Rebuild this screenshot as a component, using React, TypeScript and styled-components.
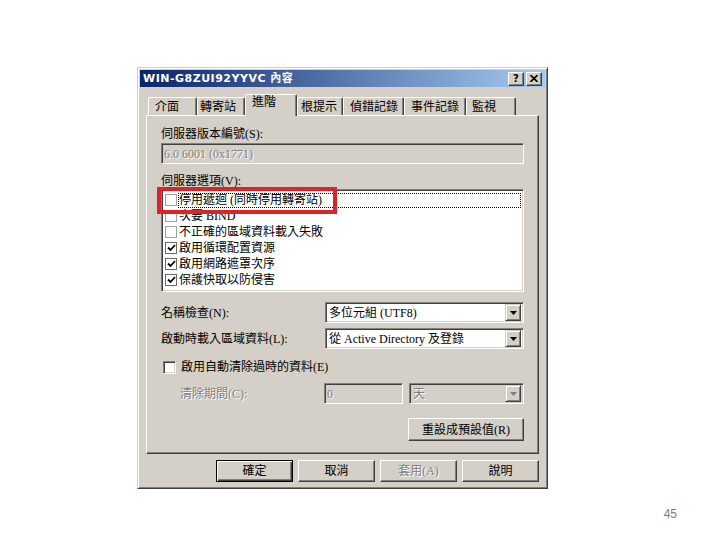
import React from 'react';
import styled, {createGlobalStyle, css} from 'styled-components';

const face = '#d4d0c8';

const GlobalStyle = createGlobalStyle`
  html, body {
    margin: 0;
    background: #fff;
  }
  body {
    font-family: "Liberation Serif", "Noto Sans CJK TC", serif;
    font-size: 12px;
    line-height: 14px;
    color: #000;
  }
`;

const raised = css`
  border: 1px solid;
  border-color: #fff #404040 #404040 #fff;
  box-shadow: inset -1px -1px #808080;
`;

const sunken = css`
  border: 1px solid;
  border-color: #808080 #fff #fff #808080;
  box-shadow: inset 1px 1px #404040, inset -1px -1px ${face};
`;

const disabledText = css`
  color: #808080;
  text-shadow: 1px 1px #fff;
`;

const Page = styled.div`
  width: 720px;
  height: 540px;
  box-sizing: border-box;
  padding: 67px 0 0 137px;
  display: flex;
  flex-direction: column;
`;

const Dialog = styled.div`
  width: 411px;
  height: 422px;
  box-sizing: border-box;
  padding: 2px;
  display: flex;
  flex-direction: column;

  background: ${face};
  border: 1px solid;
  border-color: ${face} #404040 #404040 ${face};
  box-shadow: inset 1px 1px #fff, inset -1px -1px #808080;
`;

const TitleBar = styled.div`
  display: flex;
  align-items: center;
  height: 17px;
  padding: 0 3px 0 3px;
  background: linear-gradient(to right, #0a246a, #a6caf0);
`;

const Title = styled.div`
  flex: 1;
  color: #fff;
  font-family: "DejaVu Sans", "Noto Sans CJK TC", sans-serif;
  font-weight: bold;
  font-size: 11px;
  letter-spacing: 0.5px;
  white-space: nowrap;
`;

const CaptionButtons = styled.div`
  display: flex;
  gap: 2px;
`;

const CaptionButton = styled.div`
  ${raised};
  width: 16px;
  height: 14px;
  box-sizing: border-box;
  display: flex;
  justify-content: center;
  align-items: center;
  background: ${face};
  font-family: "DejaVu Sans", sans-serif;
  font-weight: bold;
  font-size: 10px;
  line-height: 10px;
`;

const Body = styled.div`
  flex: 1;
  display: flex;
  flex-direction: column;
  padding: 7px 6px 0 6px;
`;

const TabStrip = styled.div`
  display: flex;
  align-items: flex-end;
  height: 22px;
  padding-left: 2px;
`;

type TabProps = {
    $active: boolean;
    $width: number;
    $pad: number;
}
const Tab = styled.div<TabProps>`
  position: relative;
  z-index: ${(p) => p.$active ? 1 : 0};
  box-sizing: border-box;
  width: ${(p) => p.$width}px;
  height: ${(p) => p.$active ? 22 : 18}px;
  margin-bottom: ${(p) => p.$active ? 0 : 1}px;
  padding: ${(p) => p.$active ? 0 : 2}px 0 0 ${(p) => p.$pad - 1}px;

  background: ${face};
  border-top: 1px solid #fff;
  border-left: 1px solid #fff;
  border-right: 1px solid #404040;
  border-radius: 2px 2px 0 0;
  box-shadow: inset -1px 0 #808080;
  white-space: nowrap;
`;

const Panel = styled.div`
  ${raised};
  height: 339px;
  box-sizing: border-box;
  margin-top: -1px;
  padding: 11px 14px 0 14px;
  display: flex;
  flex-direction: column;
`;

type LabelProps = {
    $gap?: number;
    $disabled?: boolean;
}
const FieldLabel = styled.div<LabelProps>`
  margin-top: ${(p) => p.$gap || 0}px;
  white-space: nowrap;
  ${(p) => p.$disabled && disabledText};
`;

type BoxProps = {
    $disabled?: boolean;
    $width?: number;
}
const TextBox = styled.div<BoxProps>`
  ${sunken};
  box-sizing: border-box;
  height: 21px;
  width: ${(p) => p.$width ? `${p.$width}px` : 'auto'};
  padding: 3px 2px 0 2px;
  background: ${(p) => p.$disabled ? face : '#fff'};
  ${(p) => p.$disabled && disabledText};
`;

const VersionBox = styled(TextBox)`
  margin-top: 2px;
`;

const ListBox = styled.div`
  ${sunken};
  position: relative;
  margin-top: 1px;
  height: 103px;
  box-sizing: border-box;
  padding: 2px 2px 0 2px;
  background: #fff;
`;

const ListRow = styled.div`
  display: flex;
  align-items: center;
  height: 16px;
  padding-left: 1px;
`;

type CheckProps = {
    $checked: boolean;
}
const ListCheck = styled.div<CheckProps>`
  width: 12px;
  height: 12px;
  box-sizing: border-box;
  border: 1px solid ${(p) => p.$checked ? '#6a6a6a' : '#a0a0a0'};
  display: flex;
  justify-content: center;
  align-items: center;
`;

type ItemTextProps = {
    $focused: boolean;
}
const ItemText = styled.span<ItemTextProps>`
  flex: 1;
  margin-left: 1px;
  padding-left: 1px;
  height: 15px;
  box-sizing: border-box;
  outline: ${(p) => p.$focused ? '1px dotted #000' : 'none'};
  outline-offset: -1px;
  white-space: nowrap;
`;

const Highlight = styled.div`
  position: absolute;
  left: -5px;
  top: -3px;
  width: 180px;
  height: 27px;
  box-sizing: border-box;
  border: 4px solid #d9252a;
  pointer-events: none;
`;

const FormGrid = styled.div`
  display: grid;
  grid-template-columns: 1fr 199px;
  row-gap: 5px;
  align-items: center;
  margin-top: 10px;
`;

const Combo = styled.div<BoxProps>`
  ${sunken};
  box-sizing: border-box;
  height: 21px;
  width: ${(p) => p.$width ? `${p.$width}px` : 'auto'};
  display: flex;
  align-items: center;
  padding: 0 2px 0 3px;
  background: ${(p) => p.$disabled ? face : '#fff'};
`;

const ComboText = styled.span<BoxProps>`
  flex: 1;
  white-space: nowrap;
  ${(p) => p.$disabled && disabledText};
`;

const DropButton = styled.div`
  width: 16px;
  height: 17px;
  box-sizing: border-box;
  display: flex;
  justify-content: center;
  align-items: center;
  background: ${face};
  border: 1px solid;
  border-color: ${face} #404040 #404040 ${face};
  box-shadow: inset 1px 1px #fff, inset -1px -1px #808080;
`;

const CheckRow = styled.div`
  display: flex;
  align-items: center;
  height: 14px;
  margin-top: 11px;
  padding-left: 2px;
  gap: 5px;
`;

const CheckBox = styled.div`
  ${sunken};
  width: 13px;
  height: 13px;
  box-sizing: border-box;
  background: #fff;
`;

const PeriodRow = styled.div`
  display: flex;
  align-items: center;
  margin-top: 9px;
  padding-left: 19px;
`;

const PeriodFields = styled.div`
  margin-left: auto;
  display: flex;
  gap: 6px;
`;

const ResetRow = styled.div`
  display: flex;
  justify-content: flex-end;
  margin-top: 14px;
`;

type ButtonProps = {
    $default?: boolean;
    $disabled?: boolean;
    $width: number;
    $height: number;
}
const Button = styled.div<ButtonProps>`
  box-sizing: border-box;
  width: ${(p) => p.$width}px;
  height: ${(p) => p.$height}px;
  display: flex;
  justify-content: center;
  align-items: center;
  background: ${face};
  white-space: nowrap;
  border: 1px solid;
  border-color: ${(p) => p.$default ? '#000' : '#fff #404040 #404040 #fff'};
  box-shadow: ${(p) => p.$default
      ? 'inset 1px 1px #fff, inset -1px -1px #404040, inset -2px -2px #808080'
      : 'inset -1px -1px #808080'};
  ${(p) => p.$disabled && disabledText};
`;

const ButtonRow = styled.div`
  display: flex;
  justify-content: flex-end;
  gap: 5px;
  margin-top: 6px;
`;

const PageNumber = styled.div`
  align-self: flex-end;
  margin: 18px 43px 0 0;
  font-family: "Liberation Sans", sans-serif;
  font-size: 12px;
  color: #7a7a7a;
`;

const tabs = [
    {label: '介面', width: 49, pad: 7},
    {label: '轉寄站', width: 48, pad: 3},
    {label: '進階', width: 52, pad: 7, active: true},
    {label: '根提示', width: 46, pad: 4},
    {label: '偵錯記錄', width: 61, pad: 7},
    {label: '事件記錄', width: 62, pad: 7},
    {label: '監視', width: 50, pad: 6},
];

const options = [
    {label: '停用遞迴 (同時停用轉寄站)', checked: false},
    {label: '次要 BIND', checked: false},
    {label: '不正確的區域資料載入失敗', checked: false},
    {label: '啟用循環配置資源', checked: true},
    {label: '啟用網路遮罩次序', checked: true},
    {label: '保護快取以防侵害', checked: true},
];

const CheckMark = () => (
    <svg width="9" height="8" viewBox="0 0 9 8">
        <path d="M1 3.5 L3.5 6 L8 1" fill="none" stroke="#000" strokeWidth="1.8"/>
    </svg>
);

const Arrow = ({disabled}: {disabled?: boolean}) => (
    <svg width="7" height="4" viewBox="0 0 7 4">
        <path d="M0 0 H7 L3.5 4 Z" fill={disabled ? '#808080' : '#000'}/>
    </svg>
);

const ComboBox = ({text, disabled, width}: {text: string; disabled?: boolean; width?: number}) => (
    <Combo $disabled={disabled} $width={width}>
        <ComboText $disabled={disabled}>{text}</ComboText>
        <DropButton><Arrow disabled={disabled}/></DropButton>
    </Combo>
);

const App: React.FC = () => {
    return (
        <>
            <GlobalStyle/>
            <Page>
                <Dialog>
                    <TitleBar>
                        <Title>WIN-G8ZUI92YYVC 內容</Title>
                        <CaptionButtons>
                            <CaptionButton>?</CaptionButton>
                            <CaptionButton>
                                <svg width="8" height="7" viewBox="0 0 8 7">
                                    <path d="M0.5 0 L7.5 7 M7.5 0 L0.5 7" stroke="#000" strokeWidth="1.6"/>
                                </svg>
                            </CaptionButton>
                        </CaptionButtons>
                    </TitleBar>
                    <Body>
                        <TabStrip>
                            {tabs.map((t) => (
                                <Tab key={t.label} $active={!!t.active} $width={t.width} $pad={t.pad}>{t.label}</Tab>
                            ))}
                        </TabStrip>
                        <Panel>
                            <FieldLabel>伺服器版本編號(S):</FieldLabel>
                            <VersionBox $disabled>6.0 6001 (0x1771)</VersionBox>
                            <FieldLabel $gap={10}>伺服器選項(V):</FieldLabel>
                            <ListBox>
                                {options.map((o, i) => (
                                    <ListRow key={o.label}>
                                        <ListCheck $checked={o.checked}>{o.checked && <CheckMark/>}</ListCheck>
                                        <ItemText $focused={i === 0}>{o.label}</ItemText>
                                    </ListRow>
                                ))}
                                <Highlight/>
                            </ListBox>
                            <FormGrid>
                                <FieldLabel>名稱檢查(N):</FieldLabel>
                                <ComboBox text="多位元組 (UTF8)"/>
                                <FieldLabel>啟動時載入區域資料(L):</FieldLabel>
                                <ComboBox text="從 Active Directory 及登錄"/>
                            </FormGrid>
                            <CheckRow>
                                <CheckBox/>
                                <span>啟用自動清除過時的資料(E)</span>
                            </CheckRow>
                            <PeriodRow>
                                <FieldLabel $disabled>清除期間(C):</FieldLabel>
                                <PeriodFields>
                                    <TextBox $disabled $width={79}>0</TextBox>
                                    <ComboBox text="天" disabled width={115}/>
                                </PeriodFields>
                            </PeriodRow>
                            <ResetRow>
                                <Button $width={116} $height={23}>重設成預設值(R)</Button>
                            </ResetRow>
                        </Panel>
                        <ButtonRow>
                            <Button $default $width={77} $height={22}>確定</Button>
                            <Button $width={77} $height={22}>取消</Button>
                            <Button $disabled $width={77} $height={22}>套用(A)</Button>
                            <Button $width={77} $height={22}>說明</Button>
                        </ButtonRow>
                    </Body>
                </Dialog>
                <PageNumber>45</PageNumber>
            </Page>
        </>
    );
};

export default App;
